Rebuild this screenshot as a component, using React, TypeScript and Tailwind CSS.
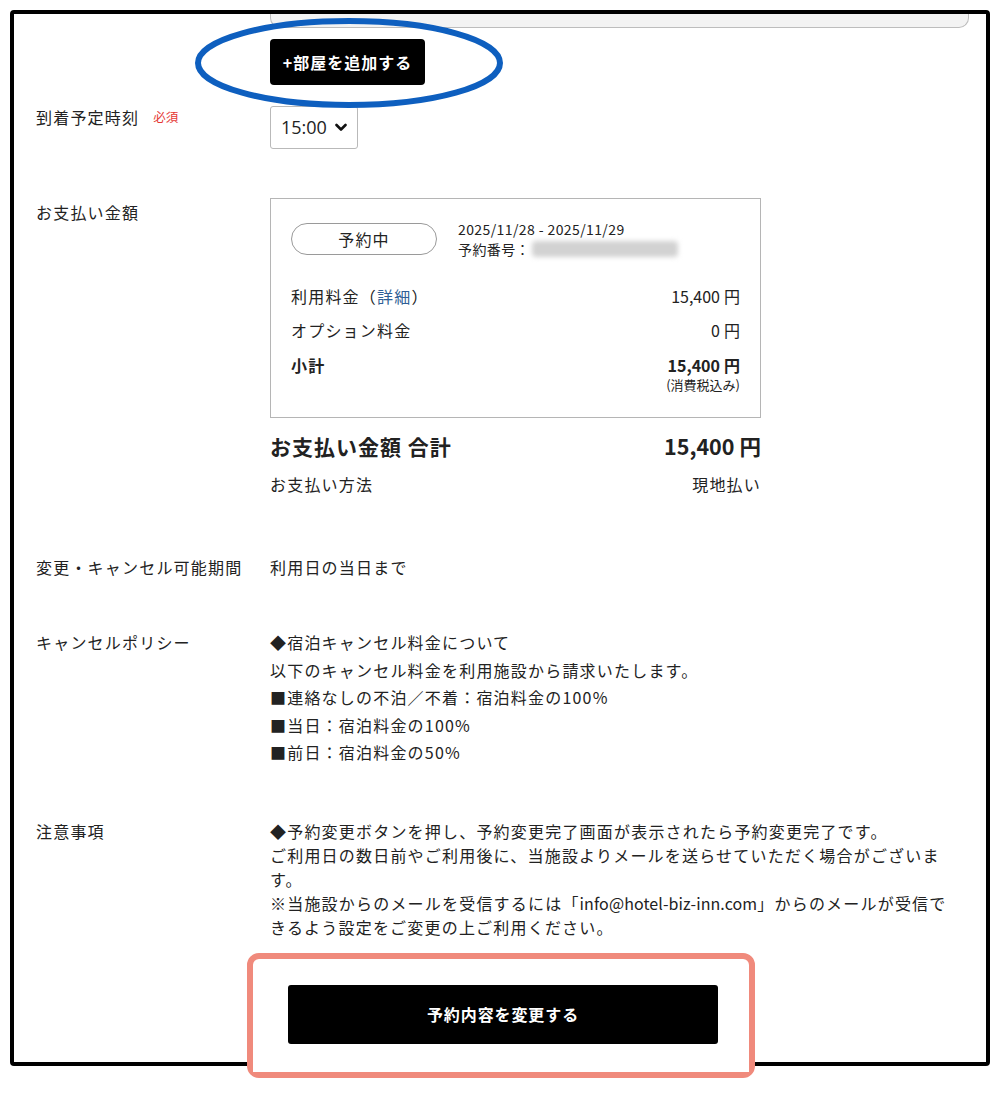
import React from "react";

const font = { fontFamily: '"Noto Sans CJK JP", "Noto Sans", sans-serif' };

export default function App() {
  return (
    <div className="relative w-[1000px] h-[1094px] bg-white overflow-hidden text-[#222]" style={font}>
      {/* screenshot frame */}
      <div className="absolute left-[10px] top-[10px] w-[980px] h-[1056px] border-4 border-black rounded-[4px] overflow-hidden bg-white">
        <div className="grid grid-cols-[234px_1fr] items-start pl-[22px] text-[16px] tracking-[1.2px]">
          {/* textarea remnant */}
          <div />
          <div className="w-[699px] h-[14px] bg-[#f3f3f3] border border-t-0 border-[#bdbdbd] rounded-b-[10px]" />

          {/* add room button */}
          <div />
          <div className="mt-[11px]">
            <button className="h-[46px] w-[155px] bg-black text-white rounded-[4px] text-[16px] font-bold tracking-[1px] flex items-center justify-center">
              +部屋を追加する
            </button>
          </div>

          {/* arrival time */}
          <div className="mt-[20px] leading-[24px] flex items-center">
            <span>到着予定時刻</span>
            <span className="ml-[14px] text-[12.5px] text-[#e53935] tracking-normal">必須</span>
          </div>
          <div className="mt-[21px]">
            <div className="h-[43px] w-[88px] border border-[#b9b9b9] rounded-[3px] flex items-center pl-[10px] gap-[8px] text-[18px] tracking-normal" style={{ fontFamily: '"Open Sans", "Noto Sans", sans-serif' }}>
              <span>15:00</span>
              <svg width="12" height="9" viewBox="0 0 12 9">
                <path d="M1.5 2 L6 6.5 L10.5 2" fill="none" stroke="#111" strokeWidth="2.6" strokeLinecap="round" strokeLinejoin="round" />
              </svg>
            </div>
          </div>

          {/* payment */}
          <div className="mt-[51px] leading-[24px]">お支払い金額</div>
          <div className="mt-[49px] w-[491px]">
            <div className="border border-[#b5b5b5] pt-[20px] pb-[23px] pl-[20px] pr-[20px]">
              <div className="flex items-center">
                <div className="w-[146px] h-[32px] rounded-full border border-[#9a9a9a] flex items-center justify-center text-[16px]">
                  予約中
                </div>
                <div className="ml-[21px] text-[14px] leading-[20px] tracking-[0.4px]">
                  <div>2025/11/28 - 2025/11/29</div>
                  <div className="flex items-center">
                    <span>予約番号：</span>
                    <span className="ml-[2px] w-[146px] h-[16px] bg-[#d2d2d2] blur-[2.5px] rounded-sm" />
                  </div>
                </div>
              </div>
              <div className="mt-[25px] flex justify-between leading-[24px]">
                <span>
                  利用料金（<span className="text-[#2f5f96]">詳細</span>）
                </span>
                <span className="tracking-normal">
                  15,400<span className="ml-[4px]">円</span>
                </span>
              </div>
              <div className="mt-[10px] flex justify-between leading-[24px]">
                <span>オプション料金</span>
                <span className="tracking-normal">
                  0<span className="ml-[4px]">円</span>
                </span>
              </div>
              <div className="mt-[11px] flex justify-between leading-[24px] font-bold">
                <span>小計</span>
                <span className="tracking-normal">
                  15,400<span className="ml-[4px]">円</span>
                </span>
              </div>
              <div className="text-right text-[13px] leading-[18px] -mt-[1px] tracking-normal">(消費税込み)</div>
            </div>
            <div className="mt-[13px] flex justify-between items-center font-bold leading-[30px]">
              <span className="text-[21px] tracking-[1px]">お支払い金額 合計</span>
              <span className="text-[21.5px] tracking-normal">
                15,400<span className="ml-[5px]">円</span>
              </span>
            </div>
            <div className="mt-[11px] flex justify-between leading-[24px]">
              <span>お支払い方法</span>
              <span>現地払い</span>
            </div>
          </div>

          {/* change period */}
          <div className="mt-[59px] leading-[24px] whitespace-nowrap">変更・キャンセル可能期間</div>
          <div className="mt-[59px] leading-[24px]">利用日の当日まで</div>

          {/* cancel policy */}
          <div className="mt-[50px] leading-[27.5px]">キャンセルポリシー</div>
          <div className="mt-[50px] leading-[27.5px]">
            <div>◆宿泊キャンセル料金について</div>
            <div>以下のキャンセル料金を利用施設から請求いたします。</div>
            <div>■連絡なしの不泊／不着：宿泊料金の100%</div>
            <div>■当日：宿泊料金の100%</div>
            <div>■前日：宿泊料金の50%</div>
          </div>

          {/* notes */}
          <div className="mt-[52px] leading-[24px]">注意事項</div>
          <div className="mt-[52px] leading-[24px] whitespace-nowrap">
            <div>◆予約変更ボタンを押し、予約変更完了画面が表示されたら予約変更完了です。</div>
            <div>ご利用日の数日前やご利用後に、当施設よりメールを送らせていただく場合がございま</div>
            <div>す。</div>
            <div>
              ※当施設からのメールを受信するには「<span className="tracking-[0.1px]">info@hotel-biz-inn.com</span>」からのメールが受信で
            </div>
            <div>きるよう設定をご変更の上ご利用ください。</div>
          </div>
        </div>

        {/* submit button */}
        <div className="mt-[46px] flex justify-center pl-[6px]">
          <button className="w-[430px] h-[59px] bg-black text-white rounded-[3px] text-[16px] font-bold tracking-[0.9px]">
            予約内容を変更する
          </button>
        </div>
      </div>

      {/* annotation: blue ellipse */}
      <svg className="absolute left-0 top-0 pointer-events-none" width="1000" height="200">
        <ellipse cx="349" cy="63" rx="151" ry="42" fill="none" stroke="#0e5fbf" strokeWidth="6" />
      </svg>

      {/* annotation: salmon rounded rectangle */}
      <div className="absolute left-[247px] top-[953px] w-[508px] h-[125px] border-[6px] border-[#f08a7c] rounded-[12px] pointer-events-none" />
      <div className="absolute left-[253px] top-[1059px] w-[496px] h-[13px] bg-white" />
    </div>
  );
}
